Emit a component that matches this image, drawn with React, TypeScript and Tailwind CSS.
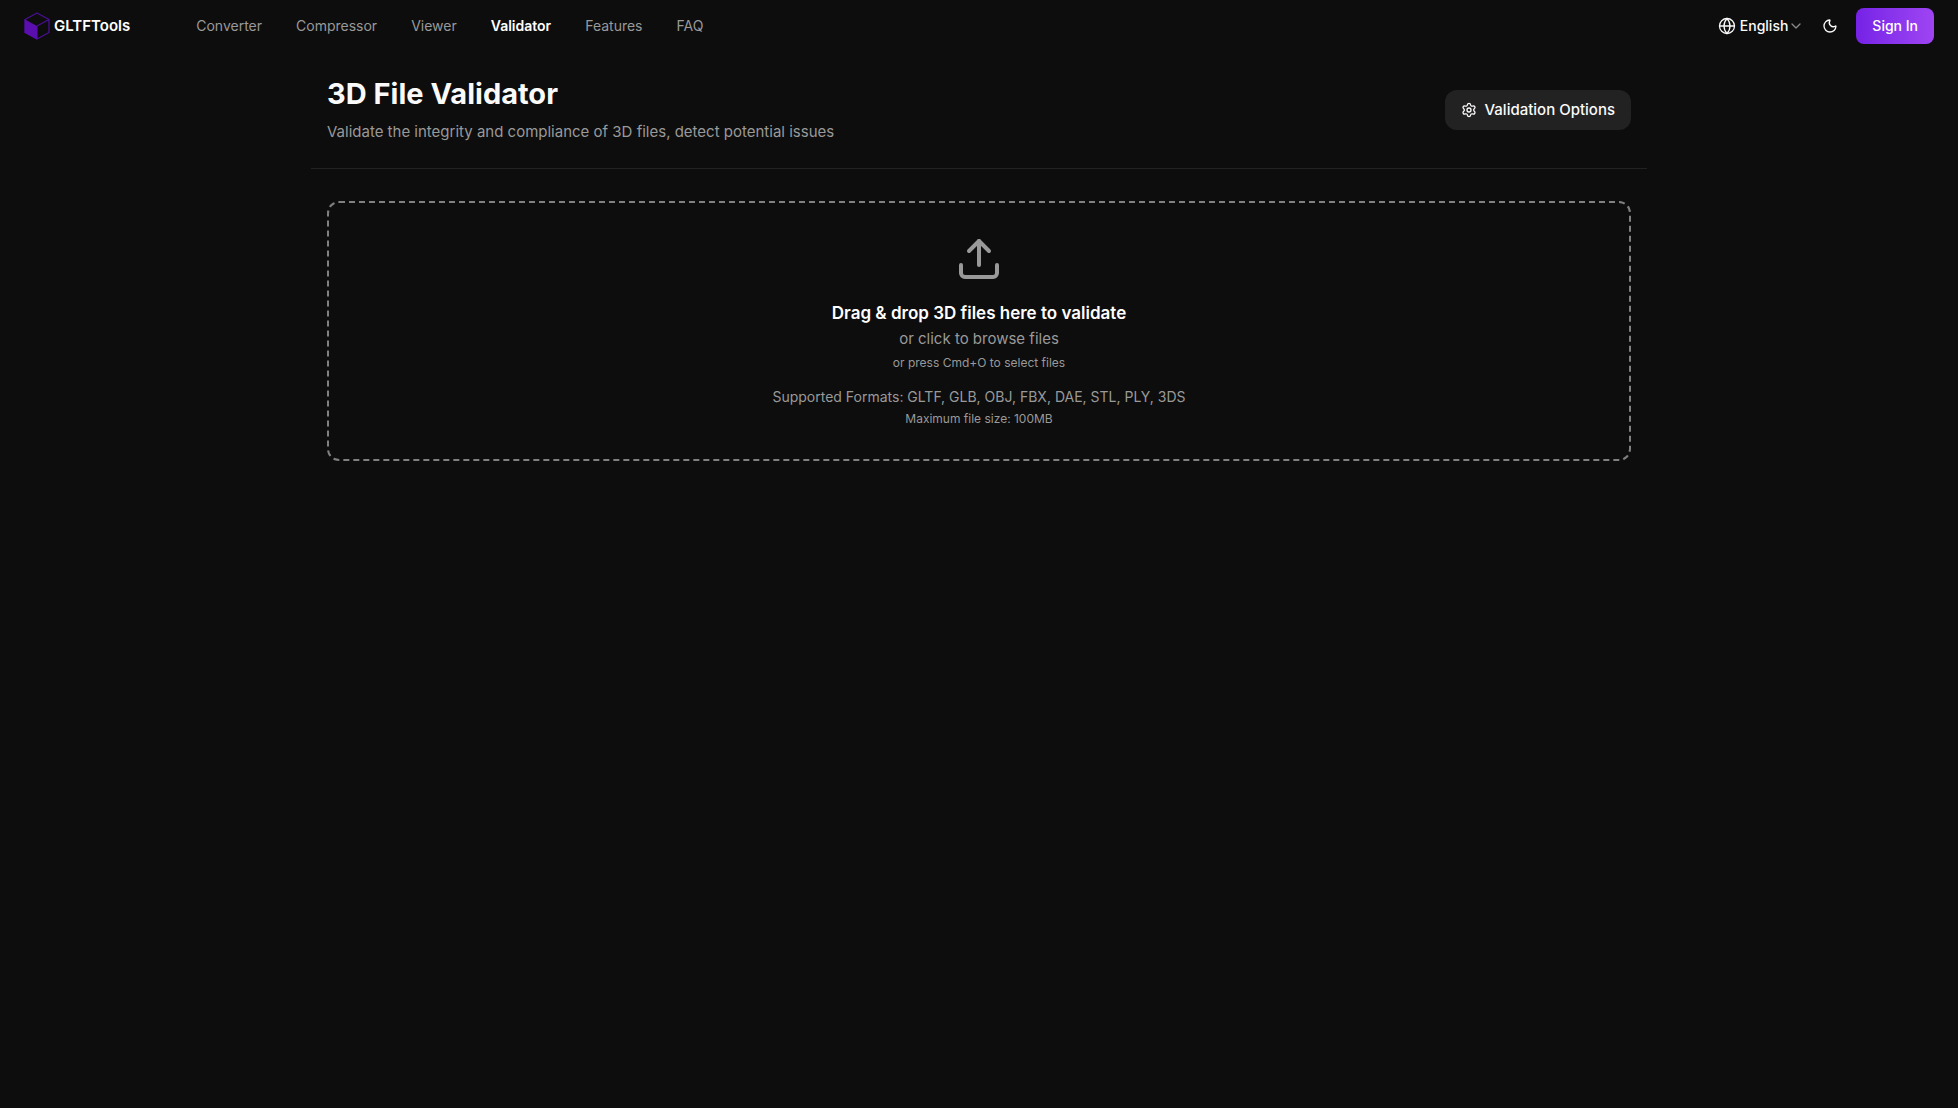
import { ChevronDown, Globe, Moon, Settings, Upload } from "lucide-react";

const navItems = [
  { label: "Converter", href: "#converter" },
  { label: "Compressor", href: "#compressor" },
  { label: "Viewer", href: "#viewer" },
  { label: "Validator", href: "#validator", active: true },
  { label: "Features", href: "#features" },
  { label: "FAQ", href: "#faq" },
];

const Logo = () => (
  <svg width="26" height="28" viewBox="0 0 26 28" fill="none" aria-hidden="true">
    <path
      d="M13 1 25 7.5v13L13 27 1 20.5v-13z M13 14 25 7.5 M13 14v13"
      stroke="#4a0f96"
      strokeWidth="1.3"
      strokeLinejoin="round"
    />
    <path d="M.7 7.3 13 14v13.5L.7 20.8z" fill="#5b0eae" />
  </svg>
);

const Header = () => (
  <header className="flex items-center justify-between px-6 py-2">
    <div className="flex items-center gap-[66px]">
      <a href="#home" className="flex items-center gap-1">
        <Logo />
        <span className="text-[15px] font-semibold text-white">GLTFTools</span>
      </a>
      <nav className="flex items-center gap-[34px]">
        {navItems.map((item) => (
          <a
            key={item.label}
            href={item.href}
            className={
              item.active
                ? "text-sm font-semibold text-white"
                : "text-sm text-[#999999]"
            }
          >
            {item.label}
          </a>
        ))}
      </nav>
    </div>

    <div className="flex items-center">
      <button className="flex items-center gap-1 text-sm font-medium text-[#fafafa]">
        <Globe className="size-[18px]" strokeWidth={1.7} />
        <span className="flex items-center">
          English
          <ChevronDown className="size-4 text-[#888888]" />
        </span>
      </button>
      <button aria-label="Toggle theme" className="mx-4 p-0.5 text-[#fafafa]">
        <Moon className="size-4" />
      </button>
      <button className="h-9 rounded-lg bg-linear-to-r from-[#7621e6] to-[#9f44f3] px-4 text-sm font-medium text-white">
        Sign In
      </button>
    </div>
  </header>
);

const Dropzone = () => (
  <button className="flex w-full flex-col items-center rounded-xl border-2 border-dashed border-[#808080] p-8 text-[#999999]">
    <Upload className="mb-4 size-12" />
    <span className="text-[17px] leading-7 font-semibold text-white">
      Drag &amp; drop 3D files here to validate
    </span>
    <span className="text-[15px] leading-6">or click to browse files</span>
    <span className="mt-1 text-xs">or press Cmd+O to select files</span>
    <span className="mt-4 text-sm">
      Supported Formats: GLTF, GLB, OBJ, FBX, DAE, STL, PLY, 3DS
    </span>
    <span className="mt-1 text-xs">Maximum file size: 100MB</span>
  </button>
);

export default function App() {
  return (
    <div className="min-h-screen bg-[#0d0d0d] font-['Inter',sans-serif]">
      <Header />
      <main className="mx-auto max-w-[1400px] px-8">
        <div className="flex items-center justify-between border-b border-[#222222] px-4 py-6">
          <div>
            <h1 className="text-[29px] leading-9 font-bold text-[#fafafa]">
              3D File Validator
            </h1>
            <p className="mt-2 text-[15px] leading-6 text-[#999999]">
              Validate the integrity and compliance of 3D files, detect
              potential issues
            </p>
          </div>
          <button className="flex h-10 items-center gap-2 rounded-xl bg-[#222222] px-4 text-[15px] font-medium text-[#fafafa]">
            <Settings className="size-4" />
            Validation Options
          </button>
        </div>
        <div className="px-4 py-8">
          <Dropzone />
        </div>
      </main>
    </div>
  );
}
